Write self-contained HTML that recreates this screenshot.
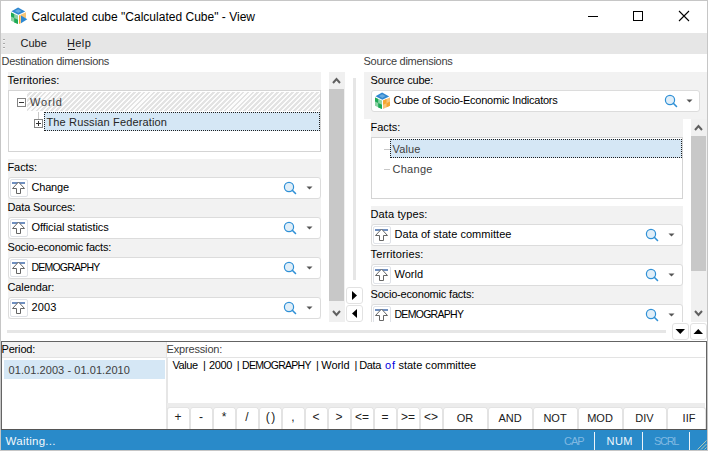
<!DOCTYPE html>
<html><head><meta charset="utf-8"><style>
html,body{margin:0;padding:0;width:708px;height:451px;overflow:hidden;background:#fff}
body{position:relative;font-family:'Liberation Sans', sans-serif}
</style></head><body>
<div style="position:absolute;left:0px;top:0px;width:708px;height:451px;background:#fff;box-sizing:border-box;border:1px solid #c6c6c6"></div>
<svg style="position:absolute;left:9px;top:6px" width="20" height="20" viewBox="9 6 20 20">
<polygon points="18.1,7.6 25.2,11.4 18.3,14.8 11.5,11.3" fill="#2f87d0"/>
<polygon points="18.2,9.2 21.6,11.1 18.3,12.9 14.9,11.1" fill="#67abe0"/>
<polygon points="11,12.6 18,15.6 18,24.1 11,20.7" fill="#8dd2a6"/>
<polygon points="11,12.6 14.2,14 14.2,18 11,16.6" fill="#1eaa56"/>
<polygon points="14.2,18 18,19.7 18,24.1 14.2,22.4" fill="#1eaa56"/>
<polygon points="19,15.4 20.6,14.7 20.6,23.3 19,24" fill="#f5a93a"/>
<polygon points="20.6,14.7 26,12.2 26,18.6 20.6,17" fill="#f8c576"/>
<polygon points="21,15.4 27.3,19.3 21,23.2" fill="#2c88d2"/>
</svg>
<div style="position:absolute;left:588px;top:16px;width:10px;height:1px;background:#000"></div>
<div style="position:absolute;left:633px;top:11px;width:10px;height:10px;box-sizing:border-box;border:1px solid #000"></div>
<svg style="position:absolute;left:678px;top:10px" width="12" height="12" viewBox="0 0 12 12">
<path d="M1 1 L11 11 M11 1 L1 11" stroke="#000" stroke-width="1.1"/></svg>
<div style="position:absolute;left:1px;top:33px;width:706px;height:21px;background:#e6e6e6"></div>
<div style="position:absolute;left:3px;top:39px;width:2px;height:1px;background:#a8a8a8"></div>
<div style="position:absolute;left:3px;top:40px;width:2px;height:1px;background:#f4f4f4"></div>
<div style="position:absolute;left:3px;top:43px;width:2px;height:1px;background:#a8a8a8"></div>
<div style="position:absolute;left:3px;top:44px;width:2px;height:1px;background:#f4f4f4"></div>
<div style="position:absolute;left:3px;top:47px;width:2px;height:1px;background:#a8a8a8"></div>
<div style="position:absolute;left:3px;top:48px;width:2px;height:1px;background:#f4f4f4"></div>
<div style="position:absolute;left:68px;top:49px;width:7px;height:1px;background:#1a1a1a"></div>
<div style="position:absolute;left:8px;top:72px;width:313px;height:80px;background:#f2f2f2"></div>
<div style="position:absolute;left:8px;top:90px;width:313px;height:62px;box-sizing:border-box;border:1px solid #d4d4d4;background:#fff"></div>
<div style="position:absolute;left:27px;top:92px;width:293px;height:19px;background:repeating-linear-gradient(-45deg,#e3e3e3 0px,#e3e3e3 2.0px,#fcfcfc 2.0px,#fcfcfc 3.5px)"></div>
<div style="position:absolute;left:17px;top:98px;width:9px;height:9px;box-sizing:border-box;border:1px solid #848484;background:#fff"></div>
<div style="position:absolute;left:19px;top:102px;width:5px;height:1px;background:#333"></div>
<div style="position:absolute;left:44px;top:112px;width:276px;height:19px;box-sizing:border-box;border:1px dotted #202020;background:#d5e7f5"></div>
<div style="position:absolute;left:38px;top:112px;width:1px;height:7px;background:#c8c8c8"></div>
<div style="position:absolute;left:34px;top:119px;width:9px;height:9px;box-sizing:border-box;border:1px solid #848484;background:#fff"></div>
<div style="position:absolute;left:36px;top:123px;width:5px;height:1px;background:#333"></div>
<div style="position:absolute;left:38px;top:121px;width:1px;height:5px;background:#333"></div>
<div style="position:absolute;left:8px;top:159px;width:313px;height:160px;background:#f2f2f2"></div>
<div style="position:absolute;left:8px;top:177px;width:313px;height:22px;box-sizing:border-box;border:1px solid #dcdcdc;border-radius:3px;background:#fff"></div>
<div style="position:absolute;left:10px;top:179px;width:18px;height:18px;box-sizing:border-box;border:1px solid #dfe2e8;border-radius:2px;background:#fff"></div>
<svg style="position:absolute;left:10px;top:179px" width="18" height="18" viewBox="0 0 18 18">
<rect x="2" y="3" width="13" height="2" fill="#6f8fc0"/>
<path d="M8.5 3 L14.5 9.5 L10.5 9.5 L10.5 14.5 L6.5 14.5 L6.5 9.5 L2.5 9.5 Z" fill="#fff" stroke="#666" stroke-width="1"/>
</svg>
<svg style="position:absolute;left:282px;top:180px" width="16" height="16" viewBox="0 0 16 16">
<circle cx="7" cy="7" r="4.6" fill="#e0eef8" stroke="#2f90d6" stroke-width="1.2"/>
<path d="M10.3 10.3 L13.5 13.5" stroke="#2f90d6" stroke-width="1.6" stroke-linecap="round"/>
</svg>
<svg style="position:absolute;left:306px;top:186px" width="7" height="4" viewBox="0 0 7 4">
<path d="M0.5 0.5 L6.5 0.5 L3.5 3.5 Z" fill="#555"/></svg>
<div style="position:absolute;left:8px;top:217px;width:313px;height:22px;box-sizing:border-box;border:1px solid #dcdcdc;border-radius:3px;background:#fff"></div>
<div style="position:absolute;left:10px;top:219px;width:18px;height:18px;box-sizing:border-box;border:1px solid #dfe2e8;border-radius:2px;background:#fff"></div>
<svg style="position:absolute;left:10px;top:219px" width="18" height="18" viewBox="0 0 18 18">
<rect x="2" y="3" width="13" height="2" fill="#6f8fc0"/>
<path d="M8.5 3 L14.5 9.5 L10.5 9.5 L10.5 14.5 L6.5 14.5 L6.5 9.5 L2.5 9.5 Z" fill="#fff" stroke="#666" stroke-width="1"/>
</svg>
<svg style="position:absolute;left:282px;top:220px" width="16" height="16" viewBox="0 0 16 16">
<circle cx="7" cy="7" r="4.6" fill="#e0eef8" stroke="#2f90d6" stroke-width="1.2"/>
<path d="M10.3 10.3 L13.5 13.5" stroke="#2f90d6" stroke-width="1.6" stroke-linecap="round"/>
</svg>
<svg style="position:absolute;left:306px;top:226px" width="7" height="4" viewBox="0 0 7 4">
<path d="M0.5 0.5 L6.5 0.5 L3.5 3.5 Z" fill="#555"/></svg>
<div style="position:absolute;left:8px;top:257px;width:313px;height:22px;box-sizing:border-box;border:1px solid #dcdcdc;border-radius:3px;background:#fff"></div>
<div style="position:absolute;left:10px;top:259px;width:18px;height:18px;box-sizing:border-box;border:1px solid #dfe2e8;border-radius:2px;background:#fff"></div>
<svg style="position:absolute;left:10px;top:259px" width="18" height="18" viewBox="0 0 18 18">
<rect x="2" y="3" width="13" height="2" fill="#6f8fc0"/>
<path d="M8.5 3 L14.5 9.5 L10.5 9.5 L10.5 14.5 L6.5 14.5 L6.5 9.5 L2.5 9.5 Z" fill="#fff" stroke="#666" stroke-width="1"/>
</svg>
<svg style="position:absolute;left:282px;top:260px" width="16" height="16" viewBox="0 0 16 16">
<circle cx="7" cy="7" r="4.6" fill="#e0eef8" stroke="#2f90d6" stroke-width="1.2"/>
<path d="M10.3 10.3 L13.5 13.5" stroke="#2f90d6" stroke-width="1.6" stroke-linecap="round"/>
</svg>
<svg style="position:absolute;left:306px;top:266px" width="7" height="4" viewBox="0 0 7 4">
<path d="M0.5 0.5 L6.5 0.5 L3.5 3.5 Z" fill="#555"/></svg>
<div style="position:absolute;left:8px;top:297px;width:313px;height:22px;box-sizing:border-box;border:1px solid #dcdcdc;border-radius:3px;background:#fff"></div>
<div style="position:absolute;left:10px;top:299px;width:18px;height:18px;box-sizing:border-box;border:1px solid #dfe2e8;border-radius:2px;background:#fff"></div>
<svg style="position:absolute;left:10px;top:299px" width="18" height="18" viewBox="0 0 18 18">
<rect x="2" y="3" width="13" height="2" fill="#6f8fc0"/>
<path d="M8.5 3 L14.5 9.5 L10.5 9.5 L10.5 14.5 L6.5 14.5 L6.5 9.5 L2.5 9.5 Z" fill="#fff" stroke="#666" stroke-width="1"/>
</svg>
<svg style="position:absolute;left:282px;top:300px" width="16" height="16" viewBox="0 0 16 16">
<circle cx="7" cy="7" r="4.6" fill="#e0eef8" stroke="#2f90d6" stroke-width="1.2"/>
<path d="M10.3 10.3 L13.5 13.5" stroke="#2f90d6" stroke-width="1.6" stroke-linecap="round"/>
</svg>
<svg style="position:absolute;left:306px;top:306px" width="7" height="4" viewBox="0 0 7 4">
<path d="M0.5 0.5 L6.5 0.5 L3.5 3.5 Z" fill="#555"/></svg>
<div style="position:absolute;left:329px;top:72px;width:16px;height:250px;background:#f0f0f0"></div>
<div style="position:absolute;left:329px;top:89px;width:15px;height:212px;background:#c8c8c8"></div>
<svg style="position:absolute;left:329px;top:72px" width="16" height="17" viewBox="0 0 16 17">
<path d="M4 11 L7.5 7 L11 11" fill="none" stroke="#606060" stroke-width="2"/></svg>
<svg style="position:absolute;left:329px;top:305px" width="16" height="17" viewBox="0 0 16 17">
<path d="M4 6 L7.5 10 L11 6" fill="none" stroke="#606060" stroke-width="2"/></svg>
<div style="position:absolute;left:353px;top:78px;width:3px;height:202px;background:#e6e6e6"></div>
<div style="position:absolute;left:346px;top:287px;width:17px;height:17px;box-sizing:border-box;border:1px solid #e2e2e2;border-radius:3px;background:#fff"></div>
<svg style="position:absolute;left:346px;top:287px" width="17" height="17" viewBox="0 0 17 17"><path d="M6 4 L11 8.5 L6 13 Z" fill="#000"/></svg>
<div style="position:absolute;left:346px;top:305px;width:17px;height:17px;box-sizing:border-box;border:1px solid #e2e2e2;border-radius:3px;background:#fff"></div>
<svg style="position:absolute;left:346px;top:305px" width="17" height="17" viewBox="0 0 17 17"><path d="M11 4 L6 8.5 L11 13 Z" fill="#000"/></svg>
<div style="position:absolute;left:364px;top:72px;width:343px;height:47px;background:#f2f2f2"></div>
<div style="position:absolute;left:371px;top:90px;width:329px;height:22px;box-sizing:border-box;border:1px solid #dcdcdc;border-radius:3px;background:#fff"></div>
<svg style="position:absolute;left:373px;top:91px" width="20" height="20" viewBox="9 6 20 20">
<polygon points="18.1,7.6 25.2,11.4 18.3,14.8 11.5,11.3" fill="#2f87d0"/>
<polygon points="18.2,9.2 21.6,11.1 18.3,12.9 14.9,11.1" fill="#67abe0"/>
<polygon points="11,12.6 18,15.6 18,24.1 11,20.7" fill="#8dd2a6"/>
<polygon points="11,12.6 14.2,14 14.2,18 11,16.6" fill="#1eaa56"/>
<polygon points="14.2,18 18,19.7 18,24.1 14.2,22.4" fill="#1eaa56"/>
<polygon points="19,15.6 26,12.6 26,20.7 19,24.1" fill="#f9c47a"/>
<polygon points="19,15.6 22.5,14.1 22.5,18.2 19,19.7" fill="#f5a630"/>
<polygon points="22.5,18.2 26,16.6 26,20.7 22.5,22.3" fill="#f5a630"/>
</svg>
<svg style="position:absolute;left:663px;top:93px" width="16" height="16" viewBox="0 0 16 16">
<circle cx="7" cy="7" r="4.6" fill="#e0eef8" stroke="#2f90d6" stroke-width="1.2"/>
<path d="M10.3 10.3 L13.5 13.5" stroke="#2f90d6" stroke-width="1.6" stroke-linecap="round"/>
</svg>
<svg style="position:absolute;left:686px;top:99px" width="7" height="4" viewBox="0 0 7 4">
<path d="M0.5 0.5 L6.5 0.5 L3.5 3.5 Z" fill="#555"/></svg>
<div style="position:absolute;left:371px;top:119px;width:312px;height:80px;background:#f2f2f2"></div>
<div style="position:absolute;left:371px;top:137px;width:312px;height:62px;box-sizing:border-box;border:1px solid #d4d4d4;background:#fff"></div>
<div style="position:absolute;left:390px;top:139px;width:292px;height:19px;box-sizing:border-box;border:1px dotted #202020;background:#d5e7f5"></div>
<div style="position:absolute;left:384px;top:149px;width:6px;height:1px;background:#c8c8c8"></div>
<div style="position:absolute;left:384px;top:169px;width:6px;height:1px;background:#c8c8c8"></div>
<div style="position:absolute;left:371px;top:206px;width:312px;height:116px;background:#f2f2f2"></div>
<div style="position:absolute;left:0;top:0;width:708px;height:322px;overflow:hidden">
<div style="position:absolute;left:371px;top:224px;width:312px;height:22px;box-sizing:border-box;border:1px solid #dcdcdc;border-radius:3px;background:#fff"></div>
<div style="position:absolute;left:373px;top:226px;width:18px;height:18px;box-sizing:border-box;border:1px solid #dfe2e8;border-radius:2px;background:#fff"></div>
<svg style="position:absolute;left:373px;top:226px" width="18" height="18" viewBox="0 0 18 18">
<rect x="2" y="3" width="13" height="2" fill="#6f8fc0"/>
<path d="M8.5 3 L14.5 9.5 L10.5 9.5 L10.5 14.5 L6.5 14.5 L6.5 9.5 L2.5 9.5 Z" fill="#fff" stroke="#666" stroke-width="1"/>
</svg>
<svg style="position:absolute;left:644px;top:227px" width="16" height="16" viewBox="0 0 16 16">
<circle cx="7" cy="7" r="4.6" fill="#e0eef8" stroke="#2f90d6" stroke-width="1.2"/>
<path d="M10.3 10.3 L13.5 13.5" stroke="#2f90d6" stroke-width="1.6" stroke-linecap="round"/>
</svg>
<svg style="position:absolute;left:668px;top:233px" width="7" height="4" viewBox="0 0 7 4">
<path d="M0.5 0.5 L6.5 0.5 L3.5 3.5 Z" fill="#555"/></svg>
<div style="position:absolute;left:371px;top:264px;width:312px;height:22px;box-sizing:border-box;border:1px solid #dcdcdc;border-radius:3px;background:#fff"></div>
<div style="position:absolute;left:373px;top:266px;width:18px;height:18px;box-sizing:border-box;border:1px solid #dfe2e8;border-radius:2px;background:#fff"></div>
<svg style="position:absolute;left:373px;top:266px" width="18" height="18" viewBox="0 0 18 18">
<rect x="2" y="3" width="13" height="2" fill="#6f8fc0"/>
<path d="M8.5 3 L14.5 9.5 L10.5 9.5 L10.5 14.5 L6.5 14.5 L6.5 9.5 L2.5 9.5 Z" fill="#fff" stroke="#666" stroke-width="1"/>
</svg>
<svg style="position:absolute;left:644px;top:267px" width="16" height="16" viewBox="0 0 16 16">
<circle cx="7" cy="7" r="4.6" fill="#e0eef8" stroke="#2f90d6" stroke-width="1.2"/>
<path d="M10.3 10.3 L13.5 13.5" stroke="#2f90d6" stroke-width="1.6" stroke-linecap="round"/>
</svg>
<svg style="position:absolute;left:668px;top:273px" width="7" height="4" viewBox="0 0 7 4">
<path d="M0.5 0.5 L6.5 0.5 L3.5 3.5 Z" fill="#555"/></svg>
<div style="position:absolute;left:371px;top:304px;width:312px;height:22px;box-sizing:border-box;border:1px solid #dcdcdc;border-radius:3px;background:#fff"></div>
<div style="position:absolute;left:373px;top:306px;width:18px;height:18px;box-sizing:border-box;border:1px solid #dfe2e8;border-radius:2px;background:#fff"></div>
<svg style="position:absolute;left:373px;top:306px" width="18" height="18" viewBox="0 0 18 18">
<rect x="2" y="3" width="13" height="2" fill="#6f8fc0"/>
<path d="M8.5 3 L14.5 9.5 L10.5 9.5 L10.5 14.5 L6.5 14.5 L6.5 9.5 L2.5 9.5 Z" fill="#fff" stroke="#666" stroke-width="1"/>
</svg>
<svg style="position:absolute;left:644px;top:307px" width="16" height="16" viewBox="0 0 16 16">
<circle cx="7" cy="7" r="4.6" fill="#e0eef8" stroke="#2f90d6" stroke-width="1.2"/>
<path d="M10.3 10.3 L13.5 13.5" stroke="#2f90d6" stroke-width="1.6" stroke-linecap="round"/>
</svg>
<svg style="position:absolute;left:668px;top:313px" width="7" height="4" viewBox="0 0 7 4">
<path d="M0.5 0.5 L6.5 0.5 L3.5 3.5 Z" fill="#555"/></svg>
</div>
<div style="position:absolute;left:691px;top:119px;width:16px;height:203px;background:#f0f0f0"></div>
<div style="position:absolute;left:691px;top:136px;width:15px;height:135px;background:#c8c8c8"></div>
<svg style="position:absolute;left:691px;top:119px" width="16" height="17" viewBox="0 0 16 17">
<path d="M4 11 L7.5 7 L11 11" fill="none" stroke="#606060" stroke-width="2"/></svg>
<svg style="position:absolute;left:691px;top:305px" width="16" height="17" viewBox="0 0 16 17">
<path d="M4 6 L7.5 10 L11 6" fill="none" stroke="#606060" stroke-width="2"/></svg>
<div style="position:absolute;left:7px;top:330px;width:659px;height:3px;background:#e6e6e6"></div>
<div style="position:absolute;left:672px;top:323px;width:17px;height:17px;box-sizing:border-box;border:1px solid #e2e2e2;border-radius:3px;background:#fff"></div>
<svg style="position:absolute;left:672px;top:323px" width="17" height="17" viewBox="0 0 17 17"><path d="M3.5 6 L13 6 L8.25 11 Z" fill="#000"/></svg>
<div style="position:absolute;left:690px;top:323px;width:17px;height:17px;box-sizing:border-box;border:1px solid #e2e2e2;border-radius:3px;background:#fff"></div>
<svg style="position:absolute;left:690px;top:323px" width="17" height="17" viewBox="0 0 17 17"><path d="M3.5 11 L13 11 L8.25 6 Z" fill="#000"/></svg>
<div style="position:absolute;left:1px;top:341px;width:706px;height:89px;box-sizing:border-box;border:1px solid #646464;border-right-color:#646464;background:#fff"></div>
<div style="position:absolute;left:2px;top:342px;width:164px;height:15px;background:#f2f2f2"></div>
<div style="position:absolute;left:2px;top:357px;width:164px;height:1px;background:#e3e3e3"></div>
<div style="position:absolute;left:4px;top:360px;width:161px;height:19px;background:#d5e7f5"></div>
<div style="position:absolute;left:166px;top:342px;width:1px;height:87px;background:#e6e6e6"></div>
<div style="position:absolute;left:167px;top:358px;width:1px;height:71px;background:#e6e6e6"></div>
<div style="position:absolute;left:166px;top:357px;width:539px;height:1px;background:#e3e3e3"></div>
<div style="position:absolute;left:167px;top:403px;width:538px;height:5px;background:#ececec"></div>
<div style="position:absolute;left:167px;top:407px;width:23px;height:22px;box-sizing:border-box;border:1px solid #e3e3e3;border-bottom:none;border-radius:3px 3px 0 0;background:#fff"></div>
<div style="position:absolute;left:166.5px;top:410px;width:23px;text-align:center;font:12px 'Liberation Sans', sans-serif;line-height:14px;color:#202020;white-space:pre;letter-spacing:0px">+</div>
<div style="position:absolute;left:190px;top:407px;width:23px;height:22px;box-sizing:border-box;border:1px solid #e3e3e3;border-bottom:none;border-radius:3px 3px 0 0;background:#fff"></div>
<div style="position:absolute;left:189.5px;top:410px;width:23px;text-align:center;font:12px 'Liberation Sans', sans-serif;line-height:14px;color:#202020;white-space:pre;letter-spacing:0px">-</div>
<div style="position:absolute;left:213px;top:407px;width:23px;height:22px;box-sizing:border-box;border:1px solid #e3e3e3;border-bottom:none;border-radius:3px 3px 0 0;background:#fff"></div>
<div style="position:absolute;left:212.5px;top:410px;width:23px;text-align:center;font:12px 'Liberation Sans', sans-serif;line-height:14px;color:#202020;white-space:pre;letter-spacing:0px">*</div>
<div style="position:absolute;left:236px;top:407px;width:23px;height:22px;box-sizing:border-box;border:1px solid #e3e3e3;border-bottom:none;border-radius:3px 3px 0 0;background:#fff"></div>
<div style="position:absolute;left:235.5px;top:410px;width:23px;text-align:center;font:12px 'Liberation Sans', sans-serif;line-height:14px;color:#202020;white-space:pre;letter-spacing:0px">/</div>
<div style="position:absolute;left:259px;top:407px;width:23px;height:22px;box-sizing:border-box;border:1px solid #e3e3e3;border-bottom:none;border-radius:3px 3px 0 0;background:#fff"></div>
<div style="position:absolute;left:258.5px;top:410px;width:23px;text-align:center;font:12px 'Liberation Sans', sans-serif;line-height:14px;color:#202020;white-space:pre;letter-spacing:-1px">( )</div>
<div style="position:absolute;left:282px;top:407px;width:23px;height:22px;box-sizing:border-box;border:1px solid #e3e3e3;border-bottom:none;border-radius:3px 3px 0 0;background:#fff"></div>
<div style="position:absolute;left:281.5px;top:410px;width:23px;text-align:center;font:12px 'Liberation Sans', sans-serif;line-height:14px;color:#202020;white-space:pre;letter-spacing:0px">,</div>
<div style="position:absolute;left:305px;top:407px;width:23px;height:22px;box-sizing:border-box;border:1px solid #e3e3e3;border-bottom:none;border-radius:3px 3px 0 0;background:#fff"></div>
<div style="position:absolute;left:304.5px;top:410px;width:23px;text-align:center;font:12px 'Liberation Sans', sans-serif;line-height:14px;color:#202020;white-space:pre;letter-spacing:0px">&lt;</div>
<div style="position:absolute;left:328px;top:407px;width:23px;height:22px;box-sizing:border-box;border:1px solid #e3e3e3;border-bottom:none;border-radius:3px 3px 0 0;background:#fff"></div>
<div style="position:absolute;left:327.5px;top:410px;width:23px;text-align:center;font:12px 'Liberation Sans', sans-serif;line-height:14px;color:#202020;white-space:pre;letter-spacing:0px">&gt;</div>
<div style="position:absolute;left:351px;top:407px;width:23px;height:22px;box-sizing:border-box;border:1px solid #e3e3e3;border-bottom:none;border-radius:3px 3px 0 0;background:#fff"></div>
<div style="position:absolute;left:350.5px;top:410px;width:23px;text-align:center;font:12px 'Liberation Sans', sans-serif;line-height:14px;color:#202020;white-space:pre;letter-spacing:0px">&lt;=</div>
<div style="position:absolute;left:374px;top:407px;width:23px;height:22px;box-sizing:border-box;border:1px solid #e3e3e3;border-bottom:none;border-radius:3px 3px 0 0;background:#fff"></div>
<div style="position:absolute;left:373.5px;top:410px;width:23px;text-align:center;font:12px 'Liberation Sans', sans-serif;line-height:14px;color:#202020;white-space:pre;letter-spacing:0px">=</div>
<div style="position:absolute;left:397px;top:407px;width:23px;height:22px;box-sizing:border-box;border:1px solid #e3e3e3;border-bottom:none;border-radius:3px 3px 0 0;background:#fff"></div>
<div style="position:absolute;left:396.5px;top:410px;width:23px;text-align:center;font:12px 'Liberation Sans', sans-serif;line-height:14px;color:#202020;white-space:pre;letter-spacing:0px">&gt;=</div>
<div style="position:absolute;left:420px;top:407px;width:23px;height:22px;box-sizing:border-box;border:1px solid #e3e3e3;border-bottom:none;border-radius:3px 3px 0 0;background:#fff"></div>
<div style="position:absolute;left:419.5px;top:410px;width:23px;text-align:center;font:12px 'Liberation Sans', sans-serif;line-height:14px;color:#202020;white-space:pre;letter-spacing:0px">&lt;&gt;</div>
<div style="position:absolute;left:443px;top:407px;width:45px;height:22px;box-sizing:border-box;border:1px solid #e3e3e3;border-bottom:none;border-radius:3px 3px 0 0;background:#fff"></div>
<div style="position:absolute;left:442.5px;top:411px;width:45px;text-align:center;font:11px 'Liberation Sans', sans-serif;line-height:14px;color:#202020">OR</div>
<div style="position:absolute;left:488px;top:407px;width:45px;height:22px;box-sizing:border-box;border:1px solid #e3e3e3;border-bottom:none;border-radius:3px 3px 0 0;background:#fff"></div>
<div style="position:absolute;left:487.5px;top:411px;width:45px;text-align:center;font:11px 'Liberation Sans', sans-serif;line-height:14px;color:#202020">AND</div>
<div style="position:absolute;left:533px;top:407px;width:45px;height:22px;box-sizing:border-box;border:1px solid #e3e3e3;border-bottom:none;border-radius:3px 3px 0 0;background:#fff"></div>
<div style="position:absolute;left:532.5px;top:411px;width:45px;text-align:center;font:11px 'Liberation Sans', sans-serif;line-height:14px;color:#202020">NOT</div>
<div style="position:absolute;left:578px;top:407px;width:45px;height:22px;box-sizing:border-box;border:1px solid #e3e3e3;border-bottom:none;border-radius:3px 3px 0 0;background:#fff"></div>
<div style="position:absolute;left:577.5px;top:411px;width:45px;text-align:center;font:11px 'Liberation Sans', sans-serif;line-height:14px;color:#202020">MOD</div>
<div style="position:absolute;left:623px;top:407px;width:44px;height:22px;box-sizing:border-box;border:1px solid #e3e3e3;border-bottom:none;border-radius:3px 3px 0 0;background:#fff"></div>
<div style="position:absolute;left:622.5px;top:411px;width:44px;text-align:center;font:11px 'Liberation Sans', sans-serif;line-height:14px;color:#202020">DIV</div>
<div style="position:absolute;left:667px;top:407px;width:39px;height:22px;box-sizing:border-box;border:1px solid #e3e3e3;border-bottom:none;border-radius:3px 3px 0 0;background:#fff"></div>
<div style="position:absolute;left:666.5px;top:411px;width:45px;text-align:center;font:11px 'Liberation Sans', sans-serif;line-height:14px;color:#202020">IIF</div>
<div style="position:absolute;left:1px;top:429px;width:706px;height:1px;background:#555"></div>
<div style="position:absolute;left:1px;top:430px;width:706px;height:20px;background:#298ac9"></div>
<div style="position:absolute;left:594px;top:432px;width:1px;height:18px;background:#eef4f9"></div>
<div style="position:absolute;left:642px;top:432px;width:1px;height:18px;background:#eef4f9"></div>
<div style="position:absolute;left:689px;top:432px;width:1px;height:18px;background:#eef4f9"></div>
<svg style="position:absolute;left:696px;top:439px" width="11" height="11" viewBox="0 0 11 11">
<path d="M10.5 1.5 L1.5 10.5 M10.5 5 L5 10.5 M10.5 8.5 L8.5 10.5" stroke="#b4c8b0" stroke-width="1"/></svg>
<div style="position:absolute;left:31.50px;top:10.84px;font-size:12px;line-height:12px;letter-spacing:0.010px;color:#000;font-weight:normal;white-space:pre;">Calculated cube &quot;Calculated Cube&quot; - View</div>
<div style="position:absolute;left:20.50px;top:37.69px;font-size:11px;line-height:11px;letter-spacing:0.007px;color:#1a1a1a;font-weight:normal;white-space:pre;">Cube</div>
<div style="position:absolute;left:67.00px;top:37.69px;font-size:11px;line-height:11px;letter-spacing:0.398px;color:#1a1a1a;font-weight:normal;white-space:pre;">Help</div>
<div style="position:absolute;left:1.50px;top:55.69px;font-size:11px;line-height:11px;letter-spacing:-0.282px;color:#404040;font-weight:normal;white-space:pre;">Destination dimensions</div>
<div style="position:absolute;left:363.50px;top:55.69px;font-size:11px;line-height:11px;letter-spacing:-0.266px;color:#404040;font-weight:normal;white-space:pre;">Source dimensions</div>
<div style="position:absolute;left:7.50px;top:74.69px;font-size:11px;line-height:11px;letter-spacing:0.047px;color:#000;font-weight:normal;white-space:pre;">Territories:</div>
<div style="position:absolute;left:30.00px;top:96.69px;font-size:11px;line-height:11px;letter-spacing:0.848px;color:#404040;font-weight:normal;white-space:pre;">World</div>
<div style="position:absolute;left:46.50px;top:116.69px;font-size:11px;line-height:11px;letter-spacing:0.144px;color:#262626;font-weight:normal;white-space:pre;">The Russian Federation</div>
<div style="position:absolute;left:7.50px;top:161.69px;font-size:11px;line-height:11px;letter-spacing:-0.099px;color:#000;font-weight:normal;white-space:pre;">Facts:</div>
<div style="position:absolute;left:31.50px;top:181.69px;font-size:11px;line-height:11px;letter-spacing:-0.203px;color:#000;font-weight:normal;white-space:pre;">Change</div>
<div style="position:absolute;left:7.50px;top:201.69px;font-size:11px;line-height:11px;letter-spacing:-0.154px;color:#000;font-weight:normal;white-space:pre;">Data Sources:</div>
<div style="position:absolute;left:31.50px;top:221.69px;font-size:11px;line-height:11px;letter-spacing:-0.075px;color:#000;font-weight:normal;white-space:pre;">Official statistics</div>
<div style="position:absolute;left:7.50px;top:241.69px;font-size:11px;line-height:11px;letter-spacing:-0.187px;color:#000;font-weight:normal;white-space:pre;">Socio-economic facts:</div>
<div style="position:absolute;left:31.50px;top:262.11px;font-size:10.5px;line-height:10.5px;letter-spacing:-0.782px;color:#000;font-weight:normal;white-space:pre;">DEMOGRAPHY</div>
<div style="position:absolute;left:7.50px;top:281.69px;font-size:11px;line-height:11px;letter-spacing:-0.105px;color:#000;font-weight:normal;white-space:pre;">Calendar:</div>
<div style="position:absolute;left:31.50px;top:301.69px;font-size:11px;line-height:11px;letter-spacing:0.149px;color:#000;font-weight:normal;white-space:pre;">2003</div>
<div style="position:absolute;left:370.50px;top:74.69px;font-size:11px;line-height:11px;letter-spacing:-0.178px;color:#000;font-weight:normal;white-space:pre;">Source cube:</div>
<div style="position:absolute;left:393.50px;top:94.69px;font-size:11px;line-height:11px;letter-spacing:-0.235px;color:#000;font-weight:normal;white-space:pre;">Cube of Socio-Economic Indicators</div>
<div style="position:absolute;left:370.50px;top:121.69px;font-size:11px;line-height:11px;letter-spacing:-0.019px;color:#000;font-weight:normal;white-space:pre;">Facts:</div>
<div style="position:absolute;left:392.50px;top:143.69px;font-size:11px;line-height:11px;letter-spacing:0.150px;color:#404040;font-weight:normal;white-space:pre;">Value</div>
<div style="position:absolute;left:392.50px;top:163.69px;font-size:11px;line-height:11px;letter-spacing:0.277px;color:#404040;font-weight:normal;white-space:pre;">Change</div>
<div style="position:absolute;left:370.50px;top:208.69px;font-size:11px;line-height:11px;letter-spacing:0.122px;color:#000;font-weight:normal;white-space:pre;">Data types:</div>
<div style="position:absolute;left:394.50px;top:228.69px;font-size:11px;line-height:11px;letter-spacing:0.034px;color:#000;font-weight:normal;white-space:pre;">Data of state committee</div>
<div style="position:absolute;left:370.50px;top:248.69px;font-size:11px;line-height:11px;letter-spacing:0.138px;color:#000;font-weight:normal;white-space:pre;">Territories:</div>
<div style="position:absolute;left:394.50px;top:268.69px;font-size:11px;line-height:11px;letter-spacing:-0.002px;color:#000;font-weight:normal;white-space:pre;">World</div>
<div style="position:absolute;left:370.50px;top:288.69px;font-size:11px;line-height:11px;letter-spacing:-0.187px;color:#000;font-weight:normal;white-space:pre;">Socio-economic facts:</div>
<div style="position:absolute;left:394.50px;top:309.11px;font-size:10.5px;line-height:10.5px;letter-spacing:-0.716px;color:#000;font-weight:normal;white-space:pre;">DEMOGRAPHY</div>
<div style="position:absolute;left:1.50px;top:343.69px;font-size:11px;line-height:11px;letter-spacing:-0.166px;color:#000;font-weight:normal;white-space:pre;">Period:</div>
<div style="position:absolute;left:8.50px;top:364.69px;font-size:11px;line-height:11px;letter-spacing:0.070px;color:#404040;font-weight:normal;white-space:pre;">01.01.2003 - 01.01.2010</div>
<div style="position:absolute;left:166.50px;top:343.69px;font-size:11px;line-height:11px;letter-spacing:-0.161px;color:#404040;font-weight:normal;white-space:pre;">Expression:</div>
<div style="position:absolute;left:172.50px;top:359.69px;font-size:11px;line-height:11px;letter-spacing:-0.425px;color:#000;font-weight:normal;white-space:pre;">Value</div>
<div style="position:absolute;left:203.10px;top:359.69px;font-size:11px;line-height:11px;letter-spacing:0.000px;color:#000;font-weight:normal;white-space:pre;">|</div>
<div style="position:absolute;left:209.10px;top:359.69px;font-size:11px;line-height:11px;letter-spacing:-0.384px;color:#000;font-weight:normal;white-space:pre;">2000</div>
<div style="position:absolute;left:236.70px;top:359.69px;font-size:11px;line-height:11px;letter-spacing:0.000px;color:#000;font-weight:normal;white-space:pre;">|</div>
<div style="position:absolute;left:242.00px;top:360.11px;font-size:10.5px;line-height:10.5px;letter-spacing:-0.704px;color:#000;font-weight:normal;white-space:pre;">DEMOGRAPHY</div>
<div style="position:absolute;left:316.00px;top:359.69px;font-size:11px;line-height:11px;letter-spacing:0.000px;color:#000;font-weight:normal;white-space:pre;">|</div>
<div style="position:absolute;left:321.30px;top:359.69px;font-size:11px;line-height:11px;letter-spacing:-0.077px;color:#000;font-weight:normal;white-space:pre;">World</div>
<div style="position:absolute;left:354.50px;top:359.69px;font-size:11px;line-height:11px;letter-spacing:0.000px;color:#000;font-weight:normal;white-space:pre;">|</div>
<div style="position:absolute;left:359.20px;top:359.69px;font-size:11px;line-height:11px;letter-spacing:-0.373px;color:#000;font-weight:normal;white-space:pre;">Data</div>
<div style="position:absolute;left:385.00px;top:359.69px;font-size:11px;line-height:11px;letter-spacing:0.882px;color:#0000e0;font-weight:normal;white-space:pre;">of</div>
<div style="position:absolute;left:398.40px;top:359.69px;font-size:11px;line-height:11px;letter-spacing:0.013px;color:#000;font-weight:normal;white-space:pre;">state committee</div>
<div style="position:absolute;left:5.50px;top:435.77px;font-size:11.5px;line-height:11.5px;letter-spacing:0.277px;color:#f4f8fc;font-weight:normal;white-space:pre;">Waiting...</div>
<div style="position:absolute;left:564.00px;top:435.69px;font-size:11px;line-height:11px;letter-spacing:-0.990px;color:#80b9e2;font-weight:normal;white-space:pre;">CAP</div>
<div style="position:absolute;left:606.50px;top:435.69px;font-size:11px;line-height:11px;letter-spacing:0.456px;color:#f2f8fd;font-weight:normal;white-space:pre;">NUM</div>
<div style="position:absolute;left:654.00px;top:435.69px;font-size:11px;line-height:11px;letter-spacing:-1.308px;color:#80b9e2;font-weight:normal;white-space:pre;">SCRL</div>
</body></html>
